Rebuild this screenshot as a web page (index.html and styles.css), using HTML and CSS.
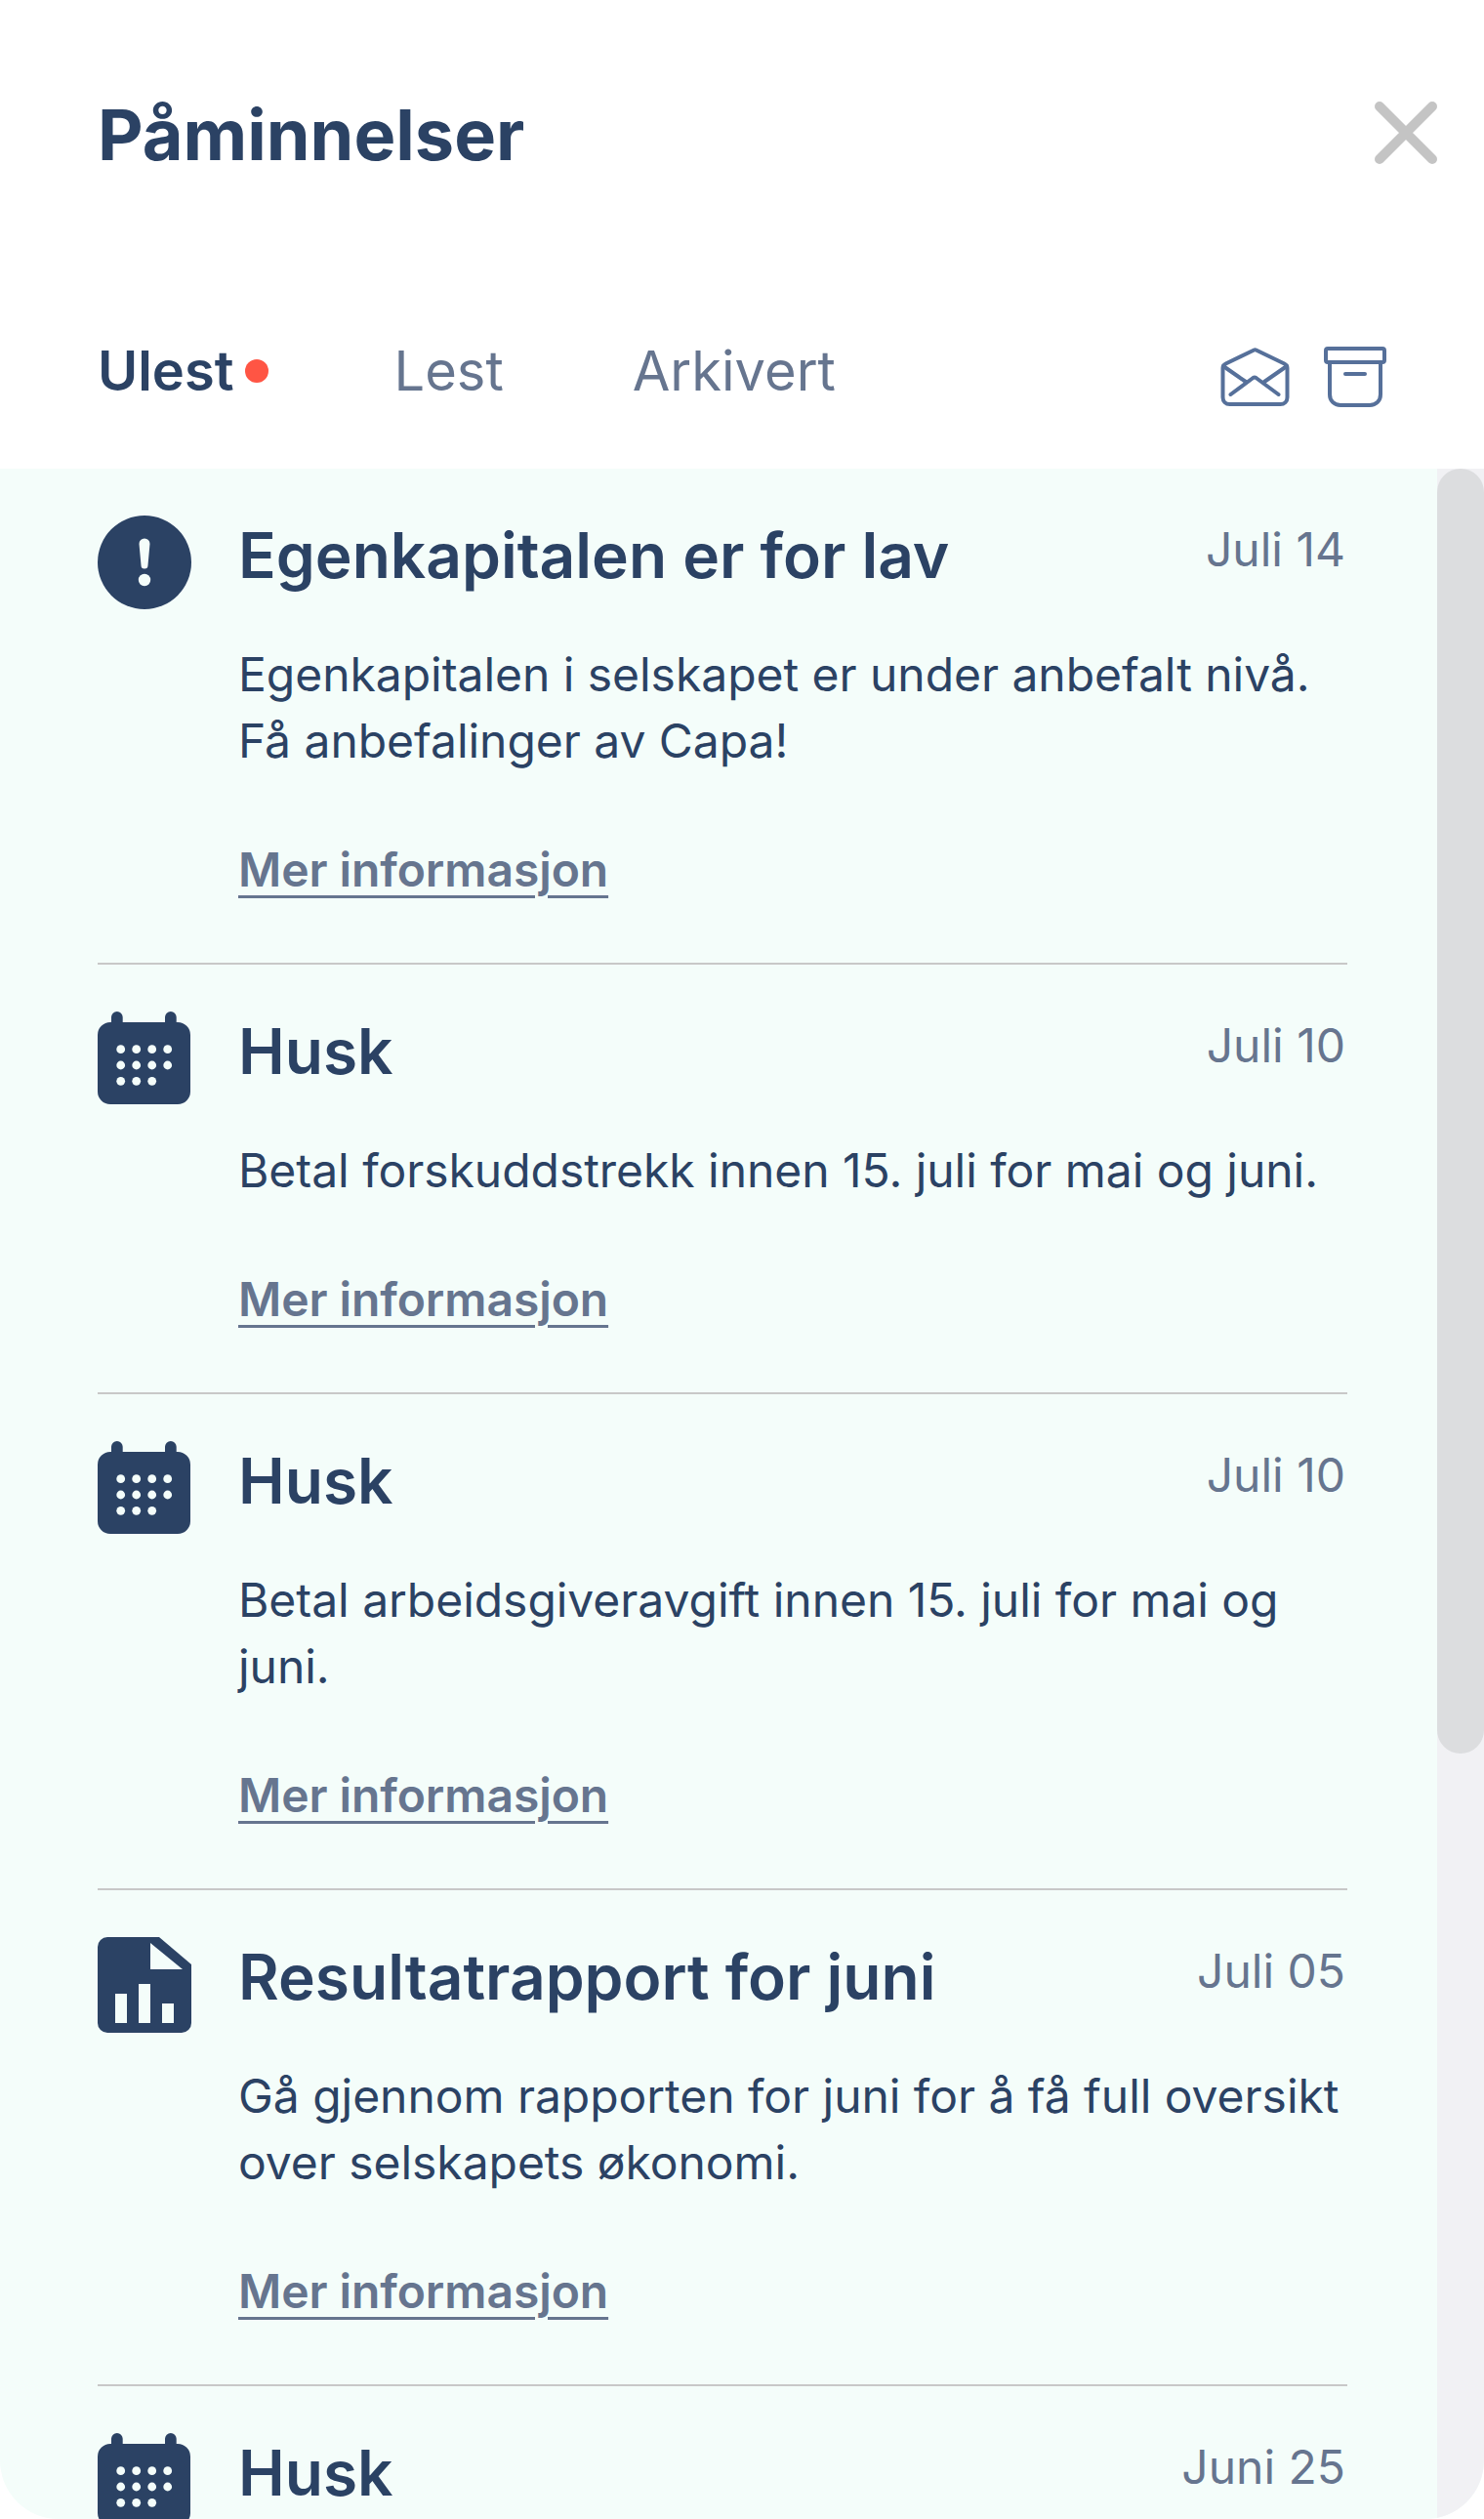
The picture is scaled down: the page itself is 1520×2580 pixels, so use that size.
FILE: index.html
```html
<!DOCTYPE html>
<html lang="no">
<head>
    <meta charset="UTF-8">
    <meta name="viewport" content="width=device-width, initial-scale=1.0">
    <title>Påminnelser</title>
    <link rel="stylesheet" href="styles.css">
</head>
<body>
    <svg class="icon-defs" width="0" height="0">
        <symbol id="icon-calendar" viewBox="0 0 96 96">
            <path fill="#2b4264" d="M13 11h1V5.850a5.850 5.850 0 0 1 11.700 0V11H69V5.850a5.850 5.850 0 0 1 11.700 0V11H82a13 13 0 0 1 13 13v58a13 13 0 0 1-13 13H13A13 13 0 0 1 0 82V24a13 13 0 0 1 13-13z"/>
            <g fill="#f4fdfa">
                <circle cx="23.700" cy="38.700" r="4.400"/><circle cx="39.700" cy="38.700" r="4.400"/><circle cx="55.700" cy="38.700" r="4.400"/><circle cx="71.700" cy="38.700" r="4.400"/>
                <circle cx="23.700" cy="55" r="4.400"/><circle cx="39.700" cy="55" r="4.400"/><circle cx="55.700" cy="55" r="4.400"/><circle cx="71.700" cy="55" r="4.400"/>
                <circle cx="23.700" cy="71.300" r="4.400"/><circle cx="39.700" cy="71.300" r="4.400"/><circle cx="55.700" cy="71.300" r="4.400"/>
            </g>
        </symbol>
    </svg>

    <div class="panel">
        <header class="panel-head">
            <h1>Påminnelser</h1>
            <button class="close-btn" type="button" aria-label="Lukk">
                <svg width="64" height="64" viewBox="0 0 64 64"><path d="M5 5l54 54M59 5L5 59" stroke="#c4c4c4" stroke-width="10" stroke-linecap="round" fill="none"/></svg>
            </button>
        </header>

        <nav class="tabs">
            <a class="tab tab-active" href="#">Ulest<span class="tab-dot"></span></a>
            <a class="tab" href="#">Lest</a>
            <a class="tab" href="#">Arkivert</a>
            <div class="tab-actions">
                <!-- mark all read -->
                <svg width="71" height="60" viewBox="0 0 71 60" fill="none" stroke="#56709a" stroke-width="4" stroke-linecap="round" stroke-linejoin="round">
                    <path d="M2.500 21c0-2 1-3.500 3-4.500L34.500 2.500q1-.5 2 0l29 14c2 1 3 2.500 3 4.500v30c0 4-3 7-7 7H9.500c-4 0-7-3-7-7z"/>
                    <path d="M3 19l23 16M68 19L45 35"/>
                    <path d="M11 48l23-17q1.500-1 3 0l23 17" transform="translate(-.500 0)"/>
                </svg>
                <svg width="64" height="62" viewBox="0 0 64 62" fill="none" stroke="#56709a" stroke-width="4" stroke-linecap="round" stroke-linejoin="round">
                    <rect x="2" y="2" width="60" height="14" rx="2"/>
                    <path d="M6 16v33c0 6.500 4.500 11 11 11h30c6.500 0 11-4.500 11-11V16"/>
                    <path d="M22 28h20"/>
                </svg>
            </div>
        </nav>

        <div class="list-wrap">
            <div class="list">
                <article class="item">
                    <svg class="item-icon" width="96" height="96" viewBox="0 0 96 96">
                        <circle cx="48" cy="48" r="48" fill="#2b4264"/>
                        <path fill="#f4fdfa" d="M42.500 29a5.500 5.500 0 0 1 11 0l-2 22a3.500 3.500 0 0 1-7 0z"/>
                        <circle cx="48" cy="66" r="6.200" fill="#f4fdfa"/>
                    </svg>
                    <div class="item-body">
                        <div class="item-top">
                            <h2>Egenkapitalen er for lav</h2>
                            <span class="item-date">Juli 14</span>
                        </div>
                        <p>Egenkapitalen i selskapet er under anbefalt nivå. Få anbefalinger av Capa!</p>
                        <a class="item-link" href="#">Mer informasjon</a>
                    </div>
                </article>

                <article class="item">
                    <svg class="item-icon" width="96" height="96"><use href="#icon-calendar"/></svg>
                    <div class="item-body">
                        <div class="item-top">
                            <h2>Husk</h2>
                            <span class="item-date">Juli 10</span>
                        </div>
                        <p>Betal forskuddstrekk innen 15. juli for mai og juni.</p>
                        <a class="item-link" href="#">Mer informasjon</a>
                    </div>
                </article>

                <article class="item">
                    <svg class="item-icon" width="96" height="96"><use href="#icon-calendar"/></svg>
                    <div class="item-body">
                        <div class="item-top">
                            <h2>Husk</h2>
                            <span class="item-date">Juli 10</span>
                        </div>
                        <p>Betal arbeidsgiveravgift innen 15. juli for mai og juni.</p>
                        <a class="item-link" href="#">Mer informasjon</a>
                    </div>
                </article>

                <article class="item">
                    <svg class="item-icon" width="96" height="98" viewBox="0 0 96 98">
                        <path fill="#2b4264" d="M10 0h53l33 28v60a10 10 0 0 1-10 10H10A10 10 0 0 1 0 88V10A10 10 0 0 1 10 0z"/>
                        <g fill="#f4fdfa">
                            <path d="M54 6l33 27H54z"/>
                            <rect x="18" y="58" width="12" height="30"/>
                            <rect x="42" y="48" width="12" height="40"/>
                            <rect x="66" y="68" width="12" height="20"/>
                        </g>
                    </svg>
                    <div class="item-body">
                        <div class="item-top">
                            <h2>Resultatrapport for juni</h2>
                            <span class="item-date">Juli 05</span>
                        </div>
                        <p>Gå gjennom rapporten for juni for å få full oversikt over selskapets økonomi.</p>
                        <a class="item-link" href="#">Mer informasjon</a>
                    </div>
                </article>

                <article class="item">
                    <svg class="item-icon" width="96" height="96"><use href="#icon-calendar"/></svg>
                    <div class="item-body">
                        <div class="item-top">
                            <h2>Husk</h2>
                            <span class="item-date">Juni 25</span>
                        </div>
                    </div>
                </article>
            </div>
            <div class="scrollbar"><div class="scrollbar-thumb"></div></div>
        </div>
    </div>
</body>
</html>
```

FILE: styles.css
```css
* { box-sizing: border-box; }
html, body { margin: 0; height: 100%; }
body { font-family: Inter, "Noto Sans", sans-serif; background: #fff; color: #2b4264; overflow: hidden; }
.icon-defs { position: absolute; }

.panel { height: 2580px; display: flex; flex-direction: column; }
.panel-head { height: 336px; padding: 98px 48px 0 100px; display: flex; justify-content: space-between; align-items: flex-start; flex-shrink: 0; }
h1 { margin: 0; font-size: 72px; line-height: 80px; font-weight: 700; }
.close-btn { margin-top: 6px; padding: 0; width: 64px; height: 64px; border: none; background: none; cursor: pointer; }
.close-btn svg { display: block; }

.tabs { height: 144px; padding: 0 100px; display: flex; align-items: flex-start; flex-shrink: 0; }
.tab { margin-top: 8px; font-size: 56px; line-height: 72px; color: #66758f; text-decoration: none; margin-right: 132px; display: flex; align-items: center; }
.tab-active { font-weight: 600; color: #2b4264; margin-right: 129px; }
.tab-dot { width: 24px; height: 24px; border-radius: 50%; background: #ff5544; margin-left: 11px; }
.tab-actions { margin-left: auto; display: flex; align-items: center; gap: 35px; padding-top: 19px; }

.list-wrap { flex: 1; min-height: 0; display: flex; background: #f4fdfa; border-radius: 0 0 60px 60px; overflow: hidden; }
.list { flex: 1; min-width: 0; overflow: hidden; padding: 0 92px 0 100px; }
.item { display: flex; gap: 48px; padding: 48px 0 61px; border-bottom: 2px solid #c8c8c8; }
.item:last-child { border-bottom: none; }
.item-icon { flex-shrink: 0; display: block; }
.item-body { flex: 1; min-width: 0; }
.item-top { display: flex; justify-content: space-between; align-items: flex-start; }
h2 { margin: 0; font-size: 64px; line-height: 82px; font-weight: 600; }
.item-date { margin-right: 2px; font-size: 48px; line-height: 70px; color: #66758f; }
.item p { margin: 47px 0 0; font-size: 48px; line-height: 68px; letter-spacing: -0.04px; }
.item-link { display: inline-block; margin-top: 64px; font-size: 48px; line-height: 68px; font-weight: 600; letter-spacing: -0.08px; color: #66758f; text-decoration: underline; text-decoration-thickness: 3px; text-underline-offset: 9px; }

.scrollbar { width: 48px; flex-shrink: 0; background: #f1f1f4; }
.scrollbar-thumb { height: 1316px; background: #dcdddf; border-radius: 24px; }
```
